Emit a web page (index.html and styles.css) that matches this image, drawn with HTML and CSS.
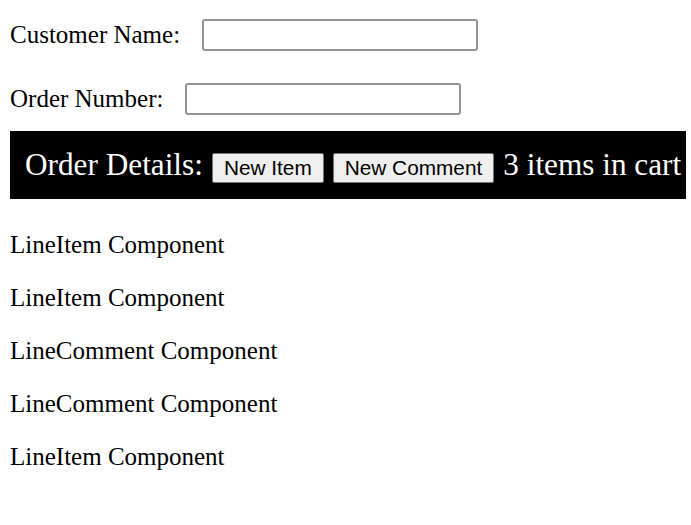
FILE: index.html
```html
<!DOCTYPE html>
<html>
<head>
<meta charset="utf-8">
<title>Order</title>
<link rel="stylesheet" href="styles.css">
</head>
<body>
<div class="page">
  <div class="field">
    <label class="field-label">Customer Name:</label>
    <input class="field-input" type="text">
  </div>
  <div class="field field-last">
    <label class="field-label">Order Number:</label>
    <input class="field-input" type="text">
  </div>
  <div class="bar">
    <span class="bar-title">Order Details:</span>
    <button class="btn">New Item</button>
    <button class="btn">New Comment</button>
    <span class="bar-count">3 items in cart</span>
  </div>
  <div class="items">
    <p class="item">LineItem Component</p>
    <p class="item">LineItem Component</p>
    <p class="item">LineComment Component</p>
    <p class="item">LineComment Component</p>
    <p class="item">LineItem Component</p>
  </div>
</div>
</body>
</html>
```
FILE: styles.css
```css
html, body {
  margin: 0;
  padding: 0;
  background: #fff;
}
body {
  font-family: "Liberation Serif", "Times New Roman", serif;
  font-size: 25px;
  color: #000;
}
.page {
  padding: 19px 5px 0 10px;
}
.field {
  display: flex;
  align-items: center;
  height: 32px;
  margin-bottom: 32px;
}
.field-last {
  margin-bottom: 16px;
}
.field-label {
  margin-right: 22px;
  line-height: 28px;
}
.field-input {
  box-sizing: border-box;
  width: 276px;
  height: 32px;
  border: 2px solid #939393;
  border-radius: 3px;
  background: #fff;
  margin: 0;
  padding: 0 4px;
}
.bar {
  box-sizing: border-box;
  height: 68px;
  background: #000;
  color: #fff;
  display: flex;
  align-items: flex-start;
  gap: 9px;
  padding: 16px 15px 0 15px;
  font-size: 31.25px;
  white-space: nowrap;
}
.bar-title, .bar-count {
  line-height: 35px;
}
.btn {
  margin-top: 6px;
  font-family: "Liberation Sans", Arial, sans-serif;
  font-size: 20.8px;
  line-height: 24px;
  padding: 2px 11px;
  border: 1px solid #767676;
  border-radius: 2px;
  background: #efefef;
  color: #000;
}
.items {
  padding-top: 7px;
}
.item {
  margin: 25px 0;
  line-height: 28px;
}
```
